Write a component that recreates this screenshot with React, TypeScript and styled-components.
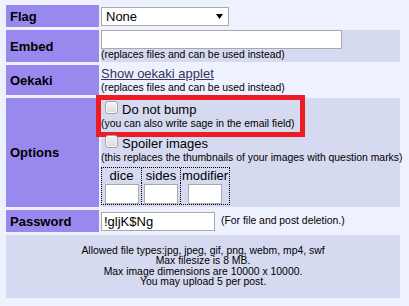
import styled, { createGlobalStyle } from 'styled-components';

const GlobalStyle = createGlobalStyle`
  html, body {
    margin: 0;
    padding: 0;
    background: #eef2ff;
  }
  body {
    font-family: "Liberation Sans", Arial, Helvetica, sans-serif;
    font-size: 13px;
    color: #000;
  }
`;

const App = () => {
  return (
    <>
      <GlobalStyle />
      <Page>
        <Form>
          <Label>Flag</Label>
          <Value>
            <SelectWrap>
              <Select defaultValue="none">
                <option value="none">None</option>
              </Select>
              <Arrow width="7" height="5" viewBox="0 0 7 5">
                <path d="M0 0h7L3.5 5z" fill="#000" />
              </Arrow>
            </SelectWrap>
          </Value>

          <Label>Embed</Label>
          <Value $striped $justify="flex-start">
            <TextInput $width={241} />
            <Small>(replaces files and can be used instead)</Small>
          </Value>

          <Label>Oekaki</Label>
          <Value>
            <Link href="#">Show oekaki applet</Link>
            <Small>(replaces files and can be used instead)</Small>
          </Value>

          <Label>Options</Label>
          <Value $striped $justify="flex-start">
            <OptionGroup $top={3}>
              <OptionLine>
                <Check type="checkbox" />
                <span>Do not bump</span>
              </OptionLine>
              <Small>(you can also write sage in the email field)</Small>
              <Highlight />
            </OptionGroup>
            <OptionGroup $top={5}>
              <OptionLine>
                <Check type="checkbox" />
                <span>Spoiler images</span>
              </OptionLine>
              <Small>(this replaces the thumbnails of your images with question marks)</Small>
            </OptionGroup>
            <DiceTable>
              <DiceHead>dice</DiceHead>
              <DiceHead $divided>sides</DiceHead>
              <DiceHead $divided>modifier</DiceHead>
              <DiceCell>
                <DiceInput />
              </DiceCell>
              <DiceCell $divided>
                <DiceInput />
              </DiceCell>
              <DiceCell $divided>
                <DiceInput />
              </DiceCell>
            </DiceTable>
          </Value>

          <Label>Password</Label>
          <PassValue>
            <TextInput $width={114} defaultValue="!gljK$Ng" />
            <Small>(For file and post deletion.)</Small>
          </PassValue>

          <Info>
            <span>Allowed file types:jpg, jpeg, gif, png, webm, mp4, swf</span>
            <span>Max filesize is 8 MB.</span>
            <span>Max image dimensions are 10000 x 10000.</span>
            <span>You may upload 5 per post.</span>
          </Info>
        </Form>
      </Page>
    </>
  );
};

const Page = styled.div`
  padding: 5px 0 0 6px;
`;

const Form = styled.div`
  display: grid;
  grid-template-columns: 93px 299px;
  grid-template-rows: 22px 32px 30px 109px 22px 63px;
  column-gap: 2px;
  row-gap: 3px;
`;

const Label = styled.div`
  display: flex;
  align-items: center;
  padding-left: 4px;
  background: #9988ee;
  font-weight: bold;
  font-size: 13px;
`;

const Value = styled.div<{ $striped?: boolean; $justify?: string }>`
  display: flex;
  flex-direction: column;
  align-items: flex-start;
  justify-content: ${(p) => p.$justify || 'center'};
  background: ${(p) => (p.$striped ? '#d6daf0' : 'transparent')};
`;

const PassValue = styled.div`
  display: flex;
  align-items: center;
  gap: 6px;
`;

const SelectWrap = styled.span`
  position: relative;
  display: inline-block;
`;

const Select = styled.select`
  appearance: none;
  width: 128px;
  height: 19px;
  box-sizing: border-box;
  border: 1px solid #a9a9a9;
  border-radius: 0;
  background: #fff;
  padding: 0 0 0 4px;
  font-family: inherit;
  font-size: 13px;
  color: #000;
`;

const Arrow = styled.svg`
  position: absolute;
  right: 6px;
  top: 7px;
  pointer-events: none;
`;

const TextInput = styled.input<{ $width: number }>`
  width: ${(p) => p.$width}px;
  height: 19px;
  box-sizing: border-box;
  margin: 0;
  border: 1px solid #a9a9a9;
  background: #fff;
  padding: 0 2px;
  font-family: inherit;
  font-size: 13px;
  color: #000;
  outline: none;
`;

const Small = styled.span`
  display: block;
  font-size: 10.4px;
  line-height: 12px;
  white-space: nowrap;
`;

const Link = styled.a`
  color: #34345c;
  text-decoration: underline;
  font-size: 13px;
  line-height: 16px;
`;

const OptionGroup = styled.div<{ $top: number }>`
  position: relative;
  margin-top: ${(p) => p.$top}px;
`;

const OptionLine = styled.label`
  display: flex;
  align-items: center;
  height: 17px;
  line-height: 15px;
  font-size: 13px;
`;

const Check = styled.input`
  appearance: none;
  align-self: flex-start;
  width: 13px;
  height: 13px;
  margin: 0 4px 0 4px;
  box-sizing: border-box;
  border: 1px solid #a3a3a3;
  border-radius: 3px;
  background: linear-gradient(#f4f4f4, #dadada);
  box-shadow: inset 0 0 0 1px #fbfbfb;
`;

const Highlight = styled.div`
  position: absolute;
  left: -5px;
  top: -6px;
  width: 209px;
  height: 42px;
  box-sizing: border-box;
  border: 5px solid #ed1c24;
  pointer-events: none;
`;

const DiceTable = styled.div`
  display: grid;
  grid-template-columns: 39px 39px 49px;
  grid-template-rows: 15px 21px;
  margin-top: 3px;
  border: 1px dotted #000;
`;

const DiceHead = styled.div<{ $divided?: boolean }>`
  text-align: center;
  line-height: 15px;
  font-size: 13px;
  border-left: ${(p) => (p.$divided ? '1px dotted #000' : 'none')};
`;

const DiceCell = styled.div<{ $divided?: boolean }>`
  display: flex;
  justify-content: center;
  align-items: center;
  border-left: ${(p) => (p.$divided ? '1px dotted #000' : 'none')};
`;

const DiceInput = styled.input`
  width: 34px;
  height: 20px;
  box-sizing: border-box;
  margin: 0;
  border: 1px solid #a9a9a9;
  background: #fff;
  outline: none;
`;

const Info = styled.div`
  grid-column: 1 / -1;
  display: flex;
  flex-direction: column;
  align-items: center;
  justify-content: center;
  background: #d6daf0;
  font-size: 10.4px;
  line-height: 10.4px;
`;

export default App;
